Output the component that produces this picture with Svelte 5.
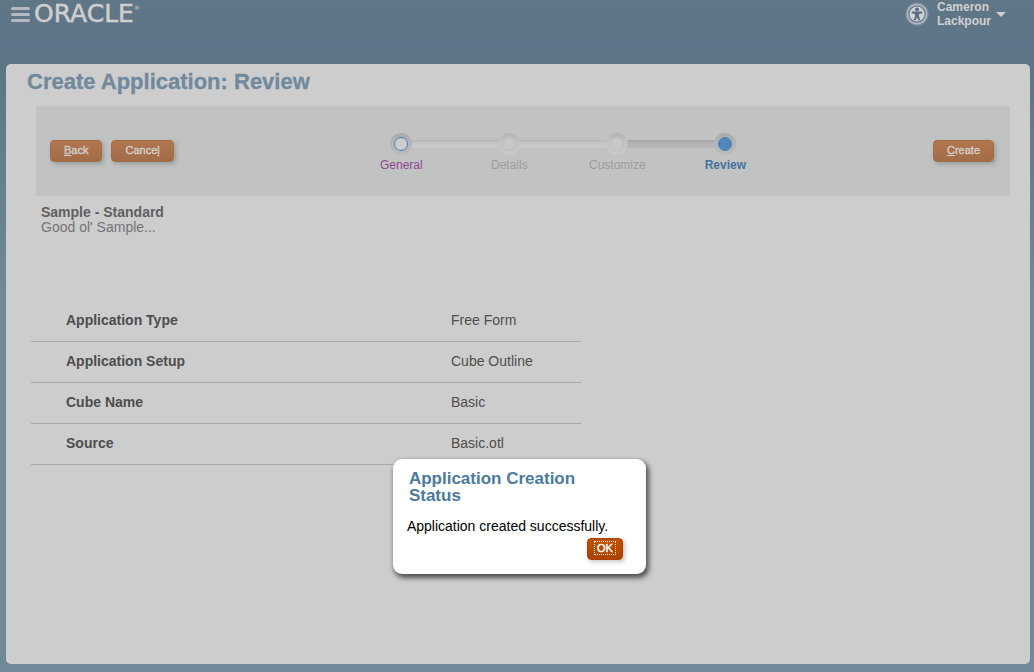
<script>
  const steps = [
    { label: 'General', state: 'visited' },
    { label: 'Details', state: 'pending' },
    { label: 'Customize', state: 'pending last-pending' },
    { label: 'Review', state: 'current' }
  ];
  const rows = [
    ['Application Type', 'Free Form'],
    ['Application Setup', 'Cube Outline'],
    ['Cube Name', 'Basic'],
    ['Source', 'Basic.otl']
  ];
</script>

<div class="shell">
  <header>
    <button class="icon-btn menu" aria-label="Navigator">
      <svg width="20" height="18" viewBox="0 0 20 18" fill="#b4bac0">
        <rect x="1" y="2" width="19" height="3" rx="1.5" />
        <rect x="1" y="8" width="19" height="3" rx="1.5" />
        <rect x="1" y="14" width="19" height="3" rx="1.5" />
      </svg>
    </button>
    <a class="logo" href="#home">ORACLE<sup>®</sup></a>
    <button class="icon-btn access" aria-label="Accessibility">
      <svg width="24" height="24" viewBox="0 0 24 24">
        <circle cx="12" cy="12" r="11.5" fill="#8490a2" />
        <circle cx="12" cy="12" r="10.3" fill="#b4bac4" />
        <circle cx="12" cy="12" r="8.2" fill="#cfd0d2" stroke="#66758f" stroke-width="1.2" />
        <circle cx="12" cy="7.4" r="1.9" fill="#586a84" />
        <path d="M6.8 9.6h10.4v1.7l-3.3.7v2l1.5 4.3h-2L12 15.2l-1.4 3.1h-2l1.5-4.3v-2l-3.3-.7z" fill="#586a84" />
      </svg>
    </button>
    <button class="user">
      <span>Cameron Lackpour</span>
      <svg width="10" height="5" viewBox="0 0 10 5"><path d="M0 0h10L5 5z" fill="#cfcfcf" /></svg>
    </button>
  </header>

  <main>
    <h1>Create Application: Review</h1>

    <div class="band">
      <div class="actions">
        <button class="btn"><u>B</u>ack</button>
        <button class="btn">Cance<u>l</u></button>
      </div>
      <ol class="train">
        {#each steps as step}
          <li class={step.state}>
            <span class="node"><span class="dot"></span></span>
            {#if step.state === 'visited'}
              <a href="#general">{step.label}</a>
            {:else}
              <span>{step.label}</span>
            {/if}
          </li>
        {/each}
      </ol>
      <button class="btn"><u>C</u>reate</button>
    </div>

    <section class="summary">
      <h2>Sample - Standard</h2>
      <p>Good ol' Sample...</p>
    </section>

    <table>
      <tbody>
        {#each rows as [name, value]}
          <tr><th scope="row">{name}</th><td>{value}</td></tr>
        {/each}
      </tbody>
    </table>
  </main>

  <div class="dialog" role="dialog" aria-labelledby="status-title">
    <h2 id="status-title">Application Creation Status</h2>
    <p>Application created successfully.</p>
    <button class="btn ok"><span>OK</span></button>
  </div>
</div>

<style>
  :global(body) { margin: 0; }
  .shell {
    position: relative;
    box-sizing: border-box;
    min-height: 100vh;
    padding: 0 4px 8px 6px;
    display: flex;
    flex-direction: column;
    background: linear-gradient(#5f7787 0, #5f7488 48px, #5d7686 64px, #708898 300px, #708898 100%);
    font-family: "Liberation Sans", Arial, Helvetica, sans-serif;
    font-size: 14px;
    color: #4d4d4d;
  }
  h1, h2, p, ol { margin: 0; padding: 0; }
  button { font-family: inherit; cursor: pointer; }

  header {
    height: 64px;
    display: flex;
    align-items: flex-start;
  }
  .icon-btn { padding: 0; border: 0; background: none; line-height: 0; }
  .menu { margin: 5px 4px 0; }
  .logo {
    margin-right: auto;
    color: #cfcfcf;
    font-family: "DejaVu Sans", sans-serif;
    font-size: 25px;
    line-height: 28px;
    text-decoration: none;
    -webkit-text-stroke: 0.5px #cfcfcf;
  }
  .logo sup { font-size: 6px; line-height: 0; vertical-align: 12px; -webkit-text-stroke: 0; }
  .access { margin: 2px 8px 0 0; }
  .user {
    display: flex;
    align-items: center;
    gap: 1px;
    width: 93px;
    padding: 0;
    border: 0;
    background: none;
    color: #cfcfcf;
    font-size: 12px;
    font-weight: bold;
    line-height: 14px;
    text-align: left;
  }
  .user span { width: 58px; }

  main {
    flex: 1;
    padding: 0 20px 0 25px;
    border-radius: 5px;
    background: #cdcdcd;
  }
  h1 {
    margin: 4px 0 10px -4px;
    color: #71899c;
    font-size: 22px;
    line-height: 28px;
    -webkit-text-stroke: 0.3px #71899c;
  }

  .band {
    display: flex;
    align-items: center;
    justify-content: space-between;
    height: 90px;
    box-sizing: border-box;
    margin-left: 5px;
    padding: 0 16px 0 14px;
    background: #c1c3c2;
  }
  .actions { display: flex; gap: 9px; }
  .btn {
    height: 22px;
    padding: 0 13px 2px;
    border: 1px solid #a66c45;
    border-radius: 4px;
    background: linear-gradient(#b2764f, #a06d49);
    box-shadow: 2px 2px 4px rgba(60, 70, 80, 0.3);
    color: #d2cdc9;
    font-size: 11px;
    -webkit-text-stroke: 0.4px currentColor;
    line-height: 18px;
  }

  .train {
    display: flex;
    width: 432px;
    margin: 4px 0 0 20px;
    list-style: none;
    font-size: 12px;
    line-height: 16px;
  }
  .train li {
    position: relative;
    flex: 1;
    display: flex;
    flex-direction: column;
    align-items: center;
    gap: 2px;
    color: #9b9d9e;
  }
  .train li:not(:last-child)::after {
    content: "";
    position: absolute;
    top: 7px;
    left: calc(50% + 10px);
    width: calc(100% - 20px);
    height: 8px;
    background: linear-gradient(#b3b5b5, #c5c7c8 3px, #c7c9ca);
  }
  .train li.last-pending:not(:last-child)::after {
    background: linear-gradient(#a6a6a6, #b4b4b4 4px, #b8b8b8);
  }
  .node {
    z-index: 1;
    display: grid;
    place-items: center;
    width: 22px;
    height: 22px;
    border-radius: 50%;
    background: linear-gradient(#b2b4b4, #c1c3c4 8px, #c8c9ca);
  }
  .dot {
    box-sizing: border-box;
    width: 14px;
    height: 14px;
    border: 1px solid #bbbdbf;
    border-radius: 50%;
    background: #c6c8ca;
  }
  .visited .node, .current .node { background: linear-gradient(#a9abab, #b4b5b5 10px, #bababa); }
  .visited .dot { border-color: #4481b8; background: #cdcdcd; }
  .current .dot { border-color: #4a83b4; background: #4f87b8; }
  .train a { color: #8b4792; text-decoration: none; }
  .current > span:last-child { color: #44729e; font-weight: bold; }

  .summary {
    margin: 9px 0 0 10px;
    color: #757575;
    line-height: 15px;
  }
  .summary h2 { color: #606060; font-size: 14px; }

  table {
    width: 550px;
    max-width: 100%;
    margin-top: 66px;
    border-collapse: collapse;
    line-height: 16px;
    text-align: left;
  }
  th, td { height: 38px; padding: 0 0 2px; border-bottom: 1px solid #a9a9a9; }
  th { width: 385px; padding-left: 35px; }

  .dialog {
    position: absolute;
    top: 459px;
    left: 38%;
    box-sizing: border-box;
    width: 253px;
    padding: 11px 23px 14px 14px;
    border-radius: 9px;
    background: #fff;
    box-shadow: 2px 3px 5px 1px rgba(0, 0, 0, 0.6);
    color: #000;
    display: flex;
    flex-direction: column;
  }
  .dialog h2 {
    padding: 0 30px 0 2px;
    color: #4c7a9f;
    font-size: 17px;
    line-height: 17px;
  }
  .dialog p { margin: 14px 0 4px; line-height: 16px; }
  .ok {
    align-self: flex-end;
    padding: 0 7px 2px;
    border-color: #a94200;
    background: linear-gradient(#c55000, #a94300);
    color: #fff;
    line-height: 12px;
  }
  .ok span { display: block; outline: 1px dotted #fff; padding: 0 2px; }
</style>
